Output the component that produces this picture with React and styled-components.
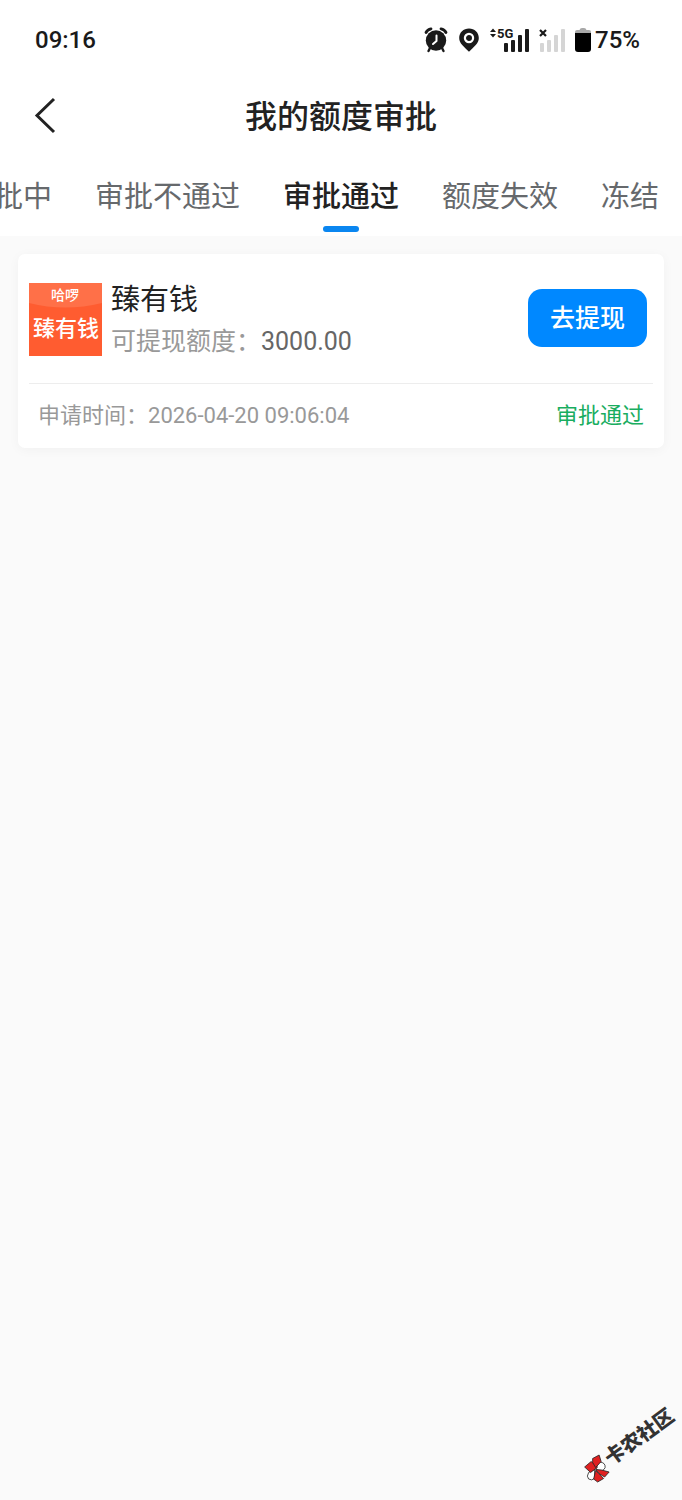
import React from "react";
import styled, { createGlobalStyle } from "styled-components";

const GlobalStyle = createGlobalStyle`
  *,
  *::before,
  *::after {
    box-sizing: border-box;
  }

  body {
    margin: 0;
    background: #fafafa;
    color: #222;
    font-family: Roboto, "Noto Sans CJK SC", sans-serif;
  }

  button {
    border: 0;
    padding: 0;
    background: none;
    color: inherit;
    font: inherit;
    cursor: pointer;
  }
`;

const Page = styled.div`
  position: relative;
  min-height: 100vh;
  overflow: hidden;
`;

const TopArea = styled.header`
  background: #fff;
`;

// Status bar

const StatusBar = styled.div`
  display: flex;
  align-items: center;
  justify-content: space-between;
  height: 80px;
  padding: 0 42px 0 35px;
  font-size: 24px;
  font-weight: 500;
  line-height: 28px;
  color: #1a1a1a;
`;

const StatusIcons = styled.div`
  display: flex;
  align-items: center;
  gap: 10px;

  svg {
    display: block;
  }
`;

const Battery = styled.span`
  display: flex;
  align-items: center;
  gap: 4px;
`;

// Title bar

const TitleBar = styled.div`
  display: grid;
  grid-template-columns: 60px 1fr 60px;
  align-items: center;
  height: 70px;
`;

const BackButton = styled.button`
  display: flex;
  align-items: center;
  justify-content: flex-end;
  height: 100%;
`;

const Title = styled.h1`
  margin: 0;
  padding-top: 4px;
  text-align: center;
  font-size: 32px;
  font-weight: 500;
  line-height: 40px;
`;

// Tabs

const Tabs = styled.nav`
  display: flex;
  justify-content: flex-end;
  gap: 43px;
  height: 86px;
  padding: 0 23px 4px 0;
  overflow: hidden;
`;

const Tab = styled.button`
  display: flex;
  flex: none;
  flex-direction: column;
  align-items: center;
  justify-content: flex-end;
  gap: 9px;
  font-size: 29px;
  font-weight: ${(p) => (p.$active ? 500 : 400)};
  line-height: 40px;
  color: ${(p) => (p.$active ? "#222" : "#66696c")};

  &::after {
    content: "";
    width: 36px;
    height: 6px;
    border-radius: 3px;
    background: ${(p) => (p.$active ? "#0a86f0" : "transparent")};
  }
`;

// Quota card

const List = styled.main`
  padding: 18px;
`;

const Card = styled.article`
  padding: 0 11px;
  border-radius: 7px;
  background: #fff;
  box-shadow: 0 2px 12px rgba(0, 0, 0, 0.04);
`;

const CardBody = styled.div`
  display: flex;
  align-items: center;
  height: 130px;
  padding: 2px 6px 0 0;
  border-bottom: 1px solid #ededed;
`;

const Logo = styled.svg`
  flex: none;
  width: 73px;
  height: 73px;
  margin-right: 9px;
`;

const Info = styled.div`
  flex: 1;
  padding-top: 2px;
`;

const Name = styled.h2`
  margin: 0;
  font-size: 29px;
  font-weight: 400;
  line-height: 42px;
`;

const Quota = styled.p`
  margin: 0;
  font-size: 25px;
  line-height: 42px;
  color: #999;
`;

const Amount = styled.span`
  color: #666;
`;

const WithdrawButton = styled.button`
  height: 58px;
  margin-bottom: 4px;
  padding: 2px 22px 0;
  border-radius: 14px;
  background: #0088ff;
  color: #fff;
  font-size: 25px;
  font-weight: 500;
  line-height: 36px;
`;

const CardFooter = styled.footer`
  display: flex;
  align-items: center;
  justify-content: space-between;
  height: 64px;
  padding: 0 9px;
  font-size: 22px;
  line-height: 32px;
  color: #999;
`;

const Status = styled.span`
  color: #19ad60;
`;

// Watermark over the page corner

const Watermark = styled.div`
  position: absolute;
  right: 0;
  bottom: 41px;
  display: flex;
  align-items: center;
  transform: rotate(-36deg);
  font-size: 20px;
  font-weight: 900;
  line-height: 28px;
  color: #333;
`;

function AlarmIcon() {
  return (
    <svg width="24" height="26" viewBox="0 0 24 26" fill="none">
      <path d="M2 5.5 Q3.5 2.5 7 1.8" stroke="#1a1a1a" strokeWidth="2.8" strokeLinecap="round" />
      <path d="M17 1.8 Q20.5 2.5 22 5.5" stroke="#1a1a1a" strokeWidth="2.8" strokeLinecap="round" />
      <path d="M6 21 L4.5 24 M18 21 L19.5 24" stroke="#1a1a1a" strokeWidth="2.4" strokeLinecap="round" />
      <circle cx="12" cy="13.5" r="10.2" fill="#1a1a1a" />
      <path d="M12.5 8.5 V14 L9 17" stroke="#fff" strokeWidth="2" strokeLinecap="round" strokeLinejoin="round" />
    </svg>
  );
}

function PinIcon() {
  return (
    <svg width="22" height="26" viewBox="0 0 22 26">
      <path
        d="M11 1.5 C5.4 1.5 1.2 5.6 1.2 11 C1.2 16.5 6 19.5 11 24.8 C16 19.5 20.8 16.5 20.8 11 C20.8 5.6 16.6 1.5 11 1.5 Z"
        fill="#1a1a1a"
      />
      <circle cx="11" cy="11" r="4.1" fill="none" stroke="#fff" strokeWidth="2.2" />
    </svg>
  );
}

function SignalIcon() {
  return (
    <svg width="39" height="26" viewBox="0 0 39 26" fill="#1a1a1a">
      <path d="M0 5 L3 1.5 L6 5 Z M0 7 L3 10.5 L6 7 Z" />
      <text x="7" y="11" fontSize="13" fontWeight="700">
        5G
      </text>
      <rect x="14" y="16" width="4" height="9" rx="1" />
      <rect x="21" y="13" width="4" height="12" rx="1" />
      <rect x="28" y="8" width="4" height="17" rx="1" />
      <rect x="35" y="2" width="4" height="23" rx="1" />
    </svg>
  );
}

function NoSignalIcon() {
  return (
    <svg width="26" height="26" viewBox="0 0 26 26" fill="#d5d5d5">
      <path d="M1 3 L7 9 M7 3 L1 9" stroke="#1a1a1a" strokeWidth="2.2" />
      <rect x="1" y="16" width="4" height="9" rx="1" />
      <rect x="8" y="13" width="4" height="12" rx="1" />
      <rect x="15" y="8" width="4" height="17" rx="1" />
      <rect x="22" y="2" width="4" height="23" rx="1" />
    </svg>
  );
}

function BatteryIcon() {
  return (
    <svg width="16" height="26" viewBox="0 0 16 26">
      <path d="M0 7 V5 Q0 3 2 3 H4.5 Q5 1 7 1 H9 Q11 1 11.5 3 H14 Q16 3 16 5 V7 Z" fill="#a8a8a8" />
      <path d="M0 6 H16 V22 Q16 25 13 25 H3 Q0 25 0 22 Z" fill="#000" />
    </svg>
  );
}

function BackIcon() {
  return (
    <svg width="26" height="38" viewBox="0 0 26 38" fill="none">
      <path d="M20 3 L3 19.5 L20 36" stroke="#222" strokeWidth="3" />
    </svg>
  );
}

function BrandLogo() {
  return (
    <Logo viewBox="0 0 73 73" role="img" aria-label="哈啰臻有钱">
      <rect width="73" height="73" fill="#ff5c30" />
      <path d="M0 0 H73 V20 Q36 29 0 20 Z" fill="#ff7048" />
      <text x="36" y="17" textAnchor="middle" fontSize="14" fontWeight="500" fill="#fff">
        哈啰
      </text>
      <text x="37" y="53" textAnchor="middle" fontSize="22" fontWeight="500" fill="#fff">
        臻有钱
      </text>
    </Logo>
  );
}

function PinwheelIcon() {
  return (
    <svg width="28" height="28" viewBox="0 0 28 28" overflow="visible">
      <g transform="rotate(36 14 14)" stroke="#222" strokeWidth="0.8">
        <path d="M14 13 L18 7.5 Q24 8 23.5 13 Q22 17 16.5 16.5 Z" fill="#fff" />
        <path d="M13 15 L7 18 Q4.5 22 7 24.5 Q10 26.5 13 24 Z" fill="#fff" />
        <path d="M3 12.5 L9.5 7 L16 12.5 L9 18 Z" fill="#e02020" />
        <path d="M11 4 L17.5 0.5 L19.5 7 L14 13 L11 8 Z" fill="#e02020" />
        <path d="M14 15 L20 15.5 L27.5 17.5 L23 22.5 L18 19.5 Z" fill="#e02020" />
        <path d="M14 16 L17 19 L22 24 L16 27.5 L12 24.5 Z" fill="#e02020" />
      </g>
    </svg>
  );
}

const tabs = ["审批中", "审批不通过", "审批通过", "额度失效", "冻结"];

const records = [
  {
    id: 1,
    name: "臻有钱",
    amount: "3000.00",
    appliedAt: "2026-04-20 09:06:04",
    status: "审批通过",
  },
];

function QuotaCard({ record }) {
  return (
    <Card>
      <CardBody>
        <BrandLogo />
        <Info>
          <Name>{record.name}</Name>
          <Quota>
            可提现额度：<Amount>{record.amount}</Amount>
          </Quota>
        </Info>
        <WithdrawButton type="button">去提现</WithdrawButton>
      </CardBody>
      <CardFooter>
        <span>申请时间：{record.appliedAt}</span>
        <Status>{record.status}</Status>
      </CardFooter>
    </Card>
  );
}

export default function App() {
  return (
    <Page lang="zh-CN">
      <GlobalStyle />
      <TopArea>
        <StatusBar>
          <span>09:16</span>
          <StatusIcons>
            <AlarmIcon />
            <PinIcon />
            <SignalIcon />
            <NoSignalIcon />
            <Battery>
              <BatteryIcon />
              75%
            </Battery>
          </StatusIcons>
        </StatusBar>
        <TitleBar>
          <BackButton type="button" aria-label="返回">
            <BackIcon />
          </BackButton>
          <Title>我的额度审批</Title>
        </TitleBar>
        <Tabs>
          {tabs.map((tab) => (
            <Tab key={tab} type="button" $active={tab === "审批通过"}>
              {tab}
            </Tab>
          ))}
        </Tabs>
      </TopArea>
      <List>
        {records.map((record) => (
          <QuotaCard key={record.id} record={record} />
        ))}
      </List>
      <Watermark>
        <PinwheelIcon />
        卡农社区
      </Watermark>
    </Page>
  );
}
